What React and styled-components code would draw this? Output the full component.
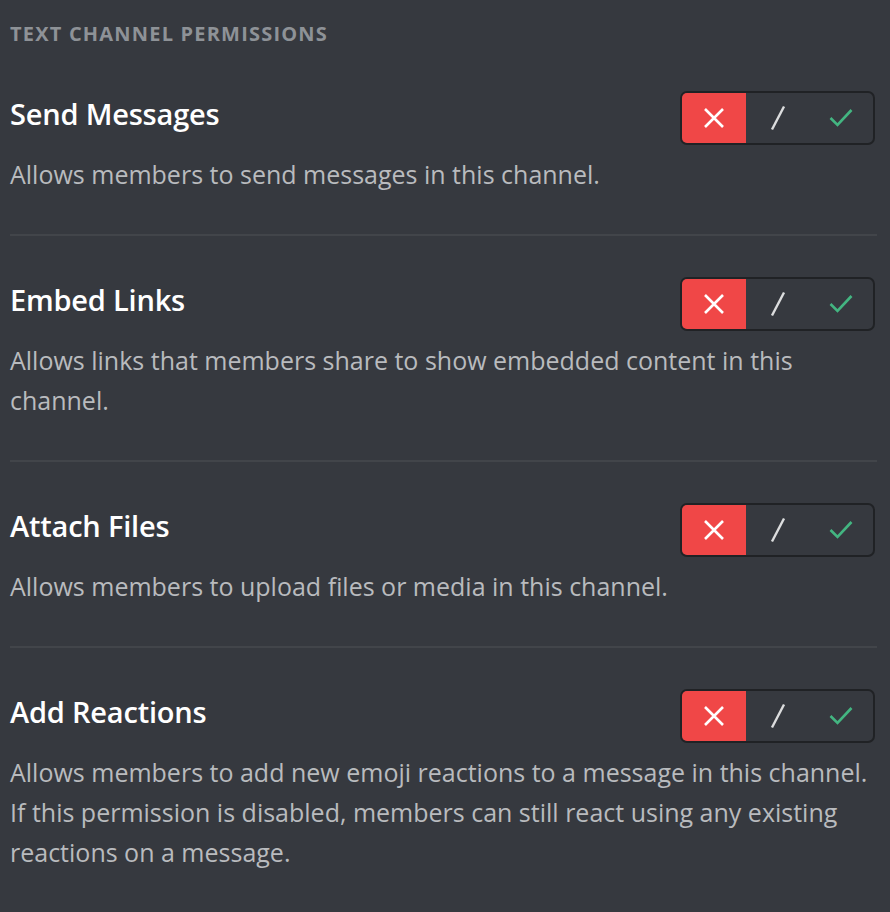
import styled, {createGlobalStyle} from "styled-components"

const RED = "#f04747"
const GREEN = "#43b581"

const permissions = [
    {
        title: "Send Messages",
        desc: "Allows members to send messages in this channel.",
    },
    {
        title: "Embed Links",
        desc: "Allows links that members share to show embedded content in this channel.",
    },
    {
        title: "Attach Files",
        desc: "Allows members to upload files or media in this channel.",
    },
    {
        title: "Add Reactions",
        desc: "Allows members to add new emoji reactions to a message in this channel. If this permission is disabled, members can still react using any existing reactions on a message.",
    },
]

const GlobalStyle = createGlobalStyle`
  body {
    margin: 0;
    background: #36393f;
    font-family: "Open Sans", "Noto Sans", sans-serif;
  }
`

function CrossIcon() {
    return (
        <svg width="22" height="22" viewBox="0 0 22 22">
            <path d="M2 2 L20 20 M20 2 L2 20" stroke="#fff" strokeWidth="2.6" fill="none"/>
        </svg>
    )
}

function SlashIcon() {
    return (
        <svg width="16" height="26" viewBox="0 0 16 26">
            <path d="M14 1.5 L2 24.5" stroke="#dcddde" strokeWidth="2.4" fill="none"/>
        </svg>
    )
}

function CheckIcon() {
    return (
        <svg width="24" height="20" viewBox="0 0 24 20">
            <path d="M1.5 10 L8.5 17 L22.5 2" stroke={GREEN} strokeWidth="2.6" fill="none"/>
        </svg>
    )
}

function PermissionToggle() {
    return (
        <StyledToggle>
            <StyledSegment $active={RED}><CrossIcon/></StyledSegment>
            <StyledSegment><SlashIcon/></StyledSegment>
            <StyledSegment><CheckIcon/></StyledSegment>
        </StyledToggle>
    )
}

export default function App() {
    return (
        <>
            <GlobalStyle/>
            <StyledPage>
                <StyledHeading>Text Channel Permissions</StyledHeading>
                {permissions.map((item) => (
                    <StyledSection key={item.title}>
                        <StyledRow>
                            <StyledTitle>{item.title}</StyledTitle>
                            <PermissionToggle/>
                        </StyledRow>
                        <StyledDesc>{item.desc}</StyledDesc>
                    </StyledSection>
                ))}
            </StyledPage>
        </>
    )
}

const StyledPage = styled.div`
  width: 890px;
  min-height: 912px;
  box-sizing: border-box;
  padding: 22px 13px 0 10px;
`

const StyledHeading = styled.h2`
  margin: 0 0 45px;
  font-size: 20px;
  line-height: 24px;
  font-weight: 700;
  text-transform: uppercase;
  letter-spacing: 1.2px;
  color: #8e9297;
`

const StyledSection = styled.div`
  padding-bottom: 40px;

  & + & {
    border-top: 2px solid #42454a;
    padding-top: 41px;
  }
`

const StyledRow = styled.div`
  display: flex;
  align-items: center;
  justify-content: space-between;
  height: 54px;
`

const StyledTitle = styled.h3`
  margin: 0 0 10px;
  font-size: 29px;
  font-weight: 600;
  letter-spacing: -0.2px;
  color: #fff;
`

const StyledToggle = styled.div`
  display: flex;
  width: 195px;
  height: 54px;
  box-sizing: border-box;
  border: 2px solid #202225;
  border-radius: 7px;
  overflow: hidden;
  margin-right: 2px;
`

const StyledSegment = styled.div`
  flex: 1;
  display: flex;
  align-items: center;
  justify-content: center;
  background: ${(p) => p.$active || "transparent"};
`

const StyledDesc = styled.p`
  margin: 9px 0 0;
  font-size: 25px;
  line-height: 40px;
  color: #b9bbbe;
`
